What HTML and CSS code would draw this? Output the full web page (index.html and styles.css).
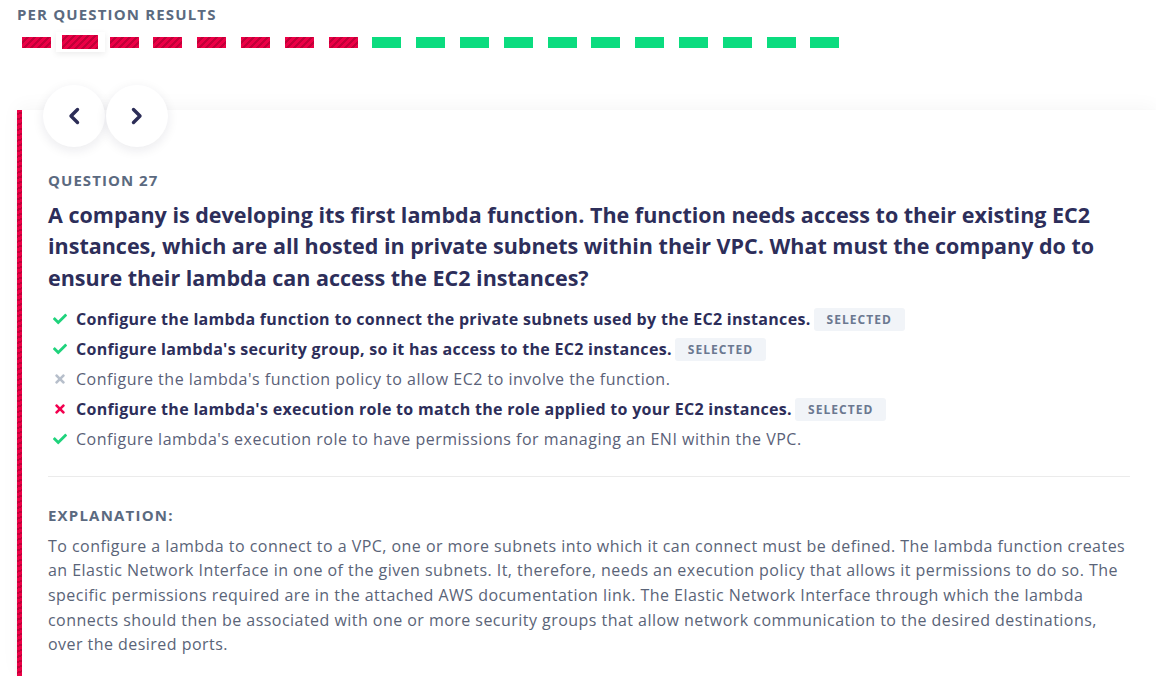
FILE: index.html
```html
<!DOCTYPE html>
<html lang="en">
<head>
<meta charset="utf-8">
<title>Per question results</title>
<link rel="stylesheet" href="styles.css">
</head>
<body>
<div class="page">
  <h2 class="section-title">PER QUESTION RESULTS</h2>
  <div class="bars">
    <span class="bar wrong"></span>
    <span class="bar-active"><span class="bar wrong big"></span></span>
    <span class="bar wrong"></span>
    <span class="bar wrong"></span>
    <span class="bar wrong"></span>
    <span class="bar wrong"></span>
    <span class="bar wrong"></span>
    <span class="bar wrong"></span>
    <span class="bar right"></span>
    <span class="bar right"></span>
    <span class="bar right"></span>
    <span class="bar right"></span>
    <span class="bar right"></span>
    <span class="bar right"></span>
    <span class="bar right"></span>
    <span class="bar right"></span>
    <span class="bar right"></span>
    <span class="bar right"></span>
    <span class="bar right"></span>
  </div>

  <div class="card">
    <div class="nav">
      <button class="nav-btn" aria-label="Previous">
        <svg width="12" height="18" viewBox="0 0 12 18"><polyline points="9.5,2.5 3,9 9.5,15.5" fill="none" stroke="#2c2d57" stroke-width="3.4" stroke-linecap="round" stroke-linejoin="round"/></svg>
      </button>
      <button class="nav-btn" aria-label="Next">
        <svg width="12" height="18" viewBox="0 0 12 18"><polyline points="2.5,2.5 9,9 2.5,15.5" fill="none" stroke="#2c2d57" stroke-width="3.4" stroke-linecap="round" stroke-linejoin="round"/></svg>
      </button>
    </div>

    <div class="q-label">QUESTION 27</div>
    <h1 class="q-title">A company is developing its first lambda function. The function needs access to their existing EC2 instances, which are all hosted in private subnets within their VPC. What must the company do to ensure their lambda can access the EC2 instances?</h1>

    <ul class="options">
      <li class="opt strong">
        <svg class="ico" width="14" height="14" viewBox="0 0 512 512"><path fill="#1fd37c" d="M173.9 439.4l-166.4-166.4c-10-10-10-26.2 0-36.2l36.2-36.2c10-10 26.2-10 36.2 0L192 312.7 432.1 72.6c10-10 26.2-10 36.2 0l36.2 36.2c10 10 10 26.2 0 36.2l-294.4 294.4c-10 10-26.2 10-36.2 0z"/></svg>
        <span class="opt-text">Configure the lambda function to connect the private subnets used by the EC2 instances.</span>
        <span class="badge">SELECTED</span>
      </li>
      <li class="opt strong">
        <svg class="ico" width="14" height="14" viewBox="0 0 512 512"><path fill="#1fd37c" d="M173.9 439.4l-166.4-166.4c-10-10-10-26.2 0-36.2l36.2-36.2c10-10 26.2-10 36.2 0L192 312.7 432.1 72.6c10-10 26.2-10 36.2 0l36.2 36.2c10 10 10 26.2 0 36.2l-294.4 294.4c-10 10-26.2 10-36.2 0z"/></svg>
        <span class="opt-text">Configure lambda's security group, so it has access to the EC2 instances.</span>
        <span class="badge">SELECTED</span>
      </li>
      <li class="opt">
        <svg class="ico" width="14" height="14" viewBox="-80 0 512 512"><path fill="#b7bfcb" d="M242.7 256l100.1-100.1c12.3-12.3 12.3-32.2 0-44.5l-22.2-22.2c-12.3-12.3-32.2-12.3-44.5 0L176 189.3 75.9 89.2c-12.3-12.3-32.2-12.3-44.5 0L9.2 111.5c-12.3 12.3-12.3 32.2 0 44.5L109.3 256 9.2 356.1c-12.3 12.3-12.3 32.2 0 44.5l22.2 22.2c12.3 12.3 32.2 12.3 44.5 0L176 322.7l100.1 100.1c12.3 12.3 32.2 12.3 44.5 0l22.2-22.2c12.3-12.3 12.3-32.2 0-44.5L242.7 256z"/></svg>
        <span class="opt-text">Configure the lambda's function policy to allow EC2 to involve the function.</span>
      </li>
      <li class="opt strong">
        <svg class="ico" width="14" height="14" viewBox="-80 0 512 512"><path fill="#f2004f" d="M242.7 256l100.1-100.1c12.3-12.3 12.3-32.2 0-44.5l-22.2-22.2c-12.3-12.3-32.2-12.3-44.5 0L176 189.3 75.9 89.2c-12.3-12.3-32.2-12.3-44.5 0L9.2 111.5c-12.3 12.3-12.3 32.2 0 44.5L109.3 256 9.2 356.1c-12.3 12.3-12.3 32.2 0 44.5l22.2 22.2c12.3 12.3 32.2 12.3 44.5 0L176 322.7l100.1 100.1c12.3 12.3 32.2 12.3 44.5 0l22.2-22.2c12.3-12.3 12.3-32.2 0-44.5L242.7 256z"/></svg>
        <span class="opt-text">Configure the lambda's execution role to match the role applied to your EC2 instances.</span>
        <span class="badge">SELECTED</span>
      </li>
      <li class="opt">
        <svg class="ico" width="14" height="14" viewBox="0 0 512 512"><path fill="#1fd37c" d="M173.9 439.4l-166.4-166.4c-10-10-10-26.2 0-36.2l36.2-36.2c10-10 26.2-10 36.2 0L192 312.7 432.1 72.6c10-10 26.2-10 36.2 0l36.2 36.2c10 10 10 26.2 0 36.2l-294.4 294.4c-10 10-26.2 10-36.2 0z"/></svg>
        <span class="opt-text">Configure lambda's execution role to have permissions for managing an ENI within the VPC.</span>
      </li>
    </ul>

    <hr class="divider">

    <div class="exp-label">EXPLANATION:</div>
    <p class="exp-text">To configure a lambda to connect to a VPC, one or more subnets into which it can connect must be defined. The lambda function creates an Elastic Network Interface in one of the given subnets. It, therefore, needs an execution policy that allows it permissions to do so. The specific permissions required are in the attached AWS documentation link. The Elastic Network Interface through which the lambda connects should then be associated with one or more security groups that allow network communication to the desired destinations, over the desired ports.</p>
  </div>
</div>
</body>
</html>
```

FILE: styles.css
```css
* { box-sizing: border-box; }

html, body {
  margin: 0;
  padding: 0;
  background: #ffffff;
  overflow: hidden;
}

body {
  font-family: "Open Sans", "Noto Sans", sans-serif;
  color: #5a6478;
}

.page {
  padding-left: 17px;
}

.section-title {
  margin: 0;
  padding-top: 4px;
  font-size: 15px;
  line-height: 20px;
  font-weight: 700;
  letter-spacing: 1.15px;
  color: #5b6a80;
}

.bars {
  display: flex;
  align-items: center;
  height: 20px;
  margin-top: 8px;
  padding-left: 5px;
}

.bar {
  display: block;
  flex: none;
  width: 29px;
  height: 11px;
  margin-right: 14.8px;
}

.bar.wrong {
  background: repeating-linear-gradient(135deg, #ec0046 0 3px, #c10038 3px 5px);
}

.bar.right {
  background: #0bdc7f;
}

.bar-active {
  flex: none;
  display: flex;
  align-items: center;
  justify-content: center;
  width: 49px;
  height: 20px;
  margin: 0 4.8px 0 -10px;
  background: #fff;
  box-shadow: 0 2px 6px rgba(0, 0, 0, 0.08);
}

.bar.big {
  width: 36px;
  height: 14px;
  margin: 0;
}

.card {
  position: relative;
  margin-top: 58px;
  padding: 60px 26px 19px 31px;
  background:
    repeating-linear-gradient(160deg, #ec0046 0 3px, #c10038 3px 5px) left top / 5px 100% no-repeat,
    #ffffff;
  box-shadow: 0 -4px 18px rgba(0, 0, 0, 0.035), 0 2px 4px rgba(0, 0, 0, 0.05);
}

.nav {
  position: absolute;
  left: 26px;
  top: -25px;
  display: flex;
  gap: 1px;
}

.nav-btn {
  width: 62px;
  height: 62px;
  border: none;
  border-radius: 50%;
  background: #ffffff;
  box-shadow: 0 3px 12px rgba(20, 20, 60, 0.09);
  display: flex;
  align-items: center;
  justify-content: center;
  padding: 0;
  cursor: pointer;
}

.q-label {
  font-size: 15px;
  line-height: 20px;
  font-weight: 700;
  letter-spacing: 1.05px;
  color: #5b6a80;
}

.q-title {
  margin: 8.5px 0 0;
  font-size: 21.5px;
  line-height: 31.5px;
  font-weight: 700;
  letter-spacing: 0;
  color: #2d2e5a;
}

.options {
  list-style: none;
  margin: 11px 0 0;
  padding: 0;
}

.opt {
  display: flex;
  align-items: center;
  height: 30px;
  padding-left: 5px;
  font-size: 16px;
  letter-spacing: 0.5px;
  color: #5a6178;
}

.opt.strong {
  font-weight: 700;
  letter-spacing: 0.3px;
  color: #2d2e5a;
}

.ico {
  flex: none;
  margin-right: 9px;
}

.badge {
  margin-left: 3px;
  padding: 0 13px;
  height: 23px;
  line-height: 23px;
  border-radius: 3px;
  background: #f1f4f8;
  color: #6b7890;
  font-size: 12px;
  font-weight: 700;
  letter-spacing: 1.05px;
}

.divider {
  margin: 22px 0 0;
  border: none;
  border-top: 1px solid #ebebeb;
}

.exp-label {
  margin-top: 28px;
  font-size: 15px;
  line-height: 20px;
  font-weight: 700;
  letter-spacing: 1.2px;
  color: #5b6a80;
}

.exp-text {
  margin: 8.5px 0 0;
  font-size: 16px;
  line-height: 24.7px;
  letter-spacing: 0.46px;
  color: #5a6478;
}
```
